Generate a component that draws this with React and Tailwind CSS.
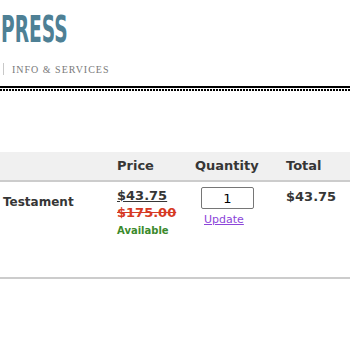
export default function App() {
  return (
    <div className="w-[350px] h-[350px] overflow-hidden bg-white font-['DejaVu_Sans',sans-serif]">
      {/* Masthead */}
      <div className="pt-[10px] pl-[1px]">
        <div className="origin-left scale-x-[0.56] text-[37px] leading-[40px] font-bold text-[#4e8095] font-['DejaVu_Sans_Condensed','DejaVu_Sans',sans-serif] whitespace-nowrap">
          PRESS
        </div>
      </div>
      <div className="mt-[13px] flex items-center pl-[3px] h-[12px]">
        <span className="w-[1px] h-[12px] bg-[#c8c8c8]" />
        <span className="ml-[8px] text-[10px] tracking-[1px] text-[#7a7a7a] font-['Liberation_Serif',serif] whitespace-nowrap">
          INFO &amp; SERVICES
        </span>
      </div>
      <div className="mt-[11px] h-[2px] bg-black" />
      <div className="mt-[1px] h-[2px] bg-[repeating-linear-gradient(90deg,#000_0_2px,transparent_2px_3px)]" />

      {/* Cart table */}
      <div className="mt-[61px]">
        <div className="grid grid-cols-[117px_78px_91px_1fr] h-[30px] items-center bg-[#f0f0f0] border-b-2 border-[#cccccc] text-[13px] font-bold text-[#363636]">
          <div />
          <div>Price</div>
          <div>Quantity</div>
          <div>Total</div>
        </div>
        <div className="grid grid-cols-[117px_78px_91px_1fr] h-[97px] border-b-2 border-[#cccccc] text-[#363636]">
          <div className="pt-[11px] pl-[3px] text-[12px] font-bold">Testament</div>
          <div className="pt-[5px] flex flex-col items-start">
            <span className="text-[13px] font-bold leading-[17px] underline">$43.75</span>
            <span className="text-[13px] font-bold leading-[17px] text-[#d63a24] line-through">$175.00</span>
            <span className="mt-[3px] text-[10px] font-bold leading-[13px] text-[#3b8a2c]">Available</span>
          </div>
          <div className="pt-[5px] pl-[6px] flex flex-col items-start">
            <input
              type="text"
              defaultValue="1"
              className="w-[53px] h-[22px] border border-[#767676] rounded-[2px] text-center text-[13px] text-black"
            />
            <a href="#" className="mt-[4px] ml-[3px] text-[11px] leading-[14px] text-[#8c45d9] underline">
              Update
            </a>
          </div>
          <div className="pt-[5px] text-[13px] font-bold">$43.75</div>
        </div>
      </div>
    </div>
  );
}
